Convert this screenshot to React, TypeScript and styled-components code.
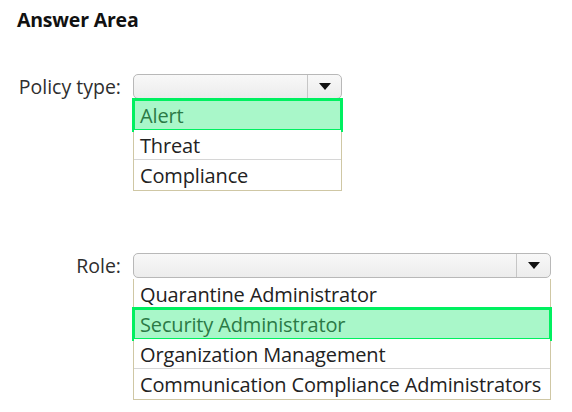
import styled, { createGlobalStyle } from 'styled-components'

const GlobalStyle = createGlobalStyle`
  html, body {
    margin: 0;
    padding: 0;
    background: #ffffff;
  }
  body {
    font-family: 'Open Sans', 'Noto Sans', sans-serif;
    color: #222222;
  }
`

const Page = styled.div`
  width: 572px;
  height: 412px;
  padding: 9px 0 0 17px;
  box-sizing: border-box;
`

const Title = styled.h1`
  margin: 0 0 43px;
  font-size: 19.5px;
  font-weight: 700;
  line-height: 22px;
  letter-spacing: -0.2px;
  color: #111111;
`

const Field = styled.div<{ $gap?: number }>`
  display: grid;
  grid-template-columns: 104px auto;
  column-gap: 12px;
  align-items: start;
  margin-bottom: ${(p) => p.$gap ?? 0}px;
`

const Label = styled.label`
  justify-self: end;
  white-space: nowrap;
  font-size: 19.5px;
  line-height: 25px;
  color: #2e2e2e;
`

const Combo = styled.div<{ $width: number }>`
  width: ${(p) => p.$width}px;
  display: flex;
  flex-direction: column;
`

const Select = styled.div`
  height: 25px;
  display: flex;
  border: 1px solid #b8b8b8;
  border-radius: 5px;
  background: linear-gradient(#f8f8f8, #ececec);
  box-sizing: border-box;
`

const SelectValue = styled.div`
  flex: 1;
`

const SelectButton = styled.div`
  width: 33px;
  display: flex;
  align-items: center;
  justify-content: center;
  border-left: 1px solid #c6c6c6;
`

const Arrow = styled.span`
  width: 0;
  height: 0;
  border-left: 6px solid transparent;
  border-right: 6px solid transparent;
  border-top: 7px solid #111111;
`

const List = styled.ul`
  margin: 1px 0 0;
  padding: 0;
  list-style: none;
  border: 1px solid #cfc7a4;
  border-top: none;
  background: #ffffff;
`

const Item = styled.li<{ $selected?: boolean }>`
  box-sizing: border-box;
  height: 30px;
  padding: 1px 6px 0;
  display: flex;
  align-items: center;
  white-space: nowrap;
  font-size: 20px;
  letter-spacing: -0.15px;
  border-bottom: 1px solid #d6d6d6;
  color: ${(p) => (p.$selected ? '#2b7a46' : '#222222')};
  background: ${(p) => (p.$selected ? '#a9f7c9' : '#ffffff')};
  outline: ${(p) => (p.$selected ? '3px solid #00f060' : 'none')};
  outline-offset: -1px;
  position: relative;

  &:last-child {
    border-bottom: none;
  }
`

function Dropdown({ width, options, selected }: { width: number; options: string[]; selected: string }) {
  return (
    <Combo $width={width}>
      <Select>
        <SelectValue />
        <SelectButton>
          <Arrow />
        </SelectButton>
      </Select>
      <List>
        {options.map((o) => (
          <Item key={o} $selected={o === selected}>
            {o}
          </Item>
        ))}
      </List>
    </Combo>
  )
}

export default function App() {
  return (
    <Page>
      <GlobalStyle />
      <Title>Answer Area</Title>

      <Field $gap={62}>
        <Label>Policy type:</Label>
        <Dropdown width={209} options={['Alert', 'Threat', 'Compliance']} selected="Alert" />
      </Field>

      <Field>
        <Label>Role:</Label>
        <Dropdown
          width={418}
          options={[
            'Quarantine Administrator',
            'Security Administrator',
            'Organization Management',
            'Communication Compliance Administrators',
          ]}
          selected="Security Administrator"
        />
      </Field>
    </Page>
  )
}
